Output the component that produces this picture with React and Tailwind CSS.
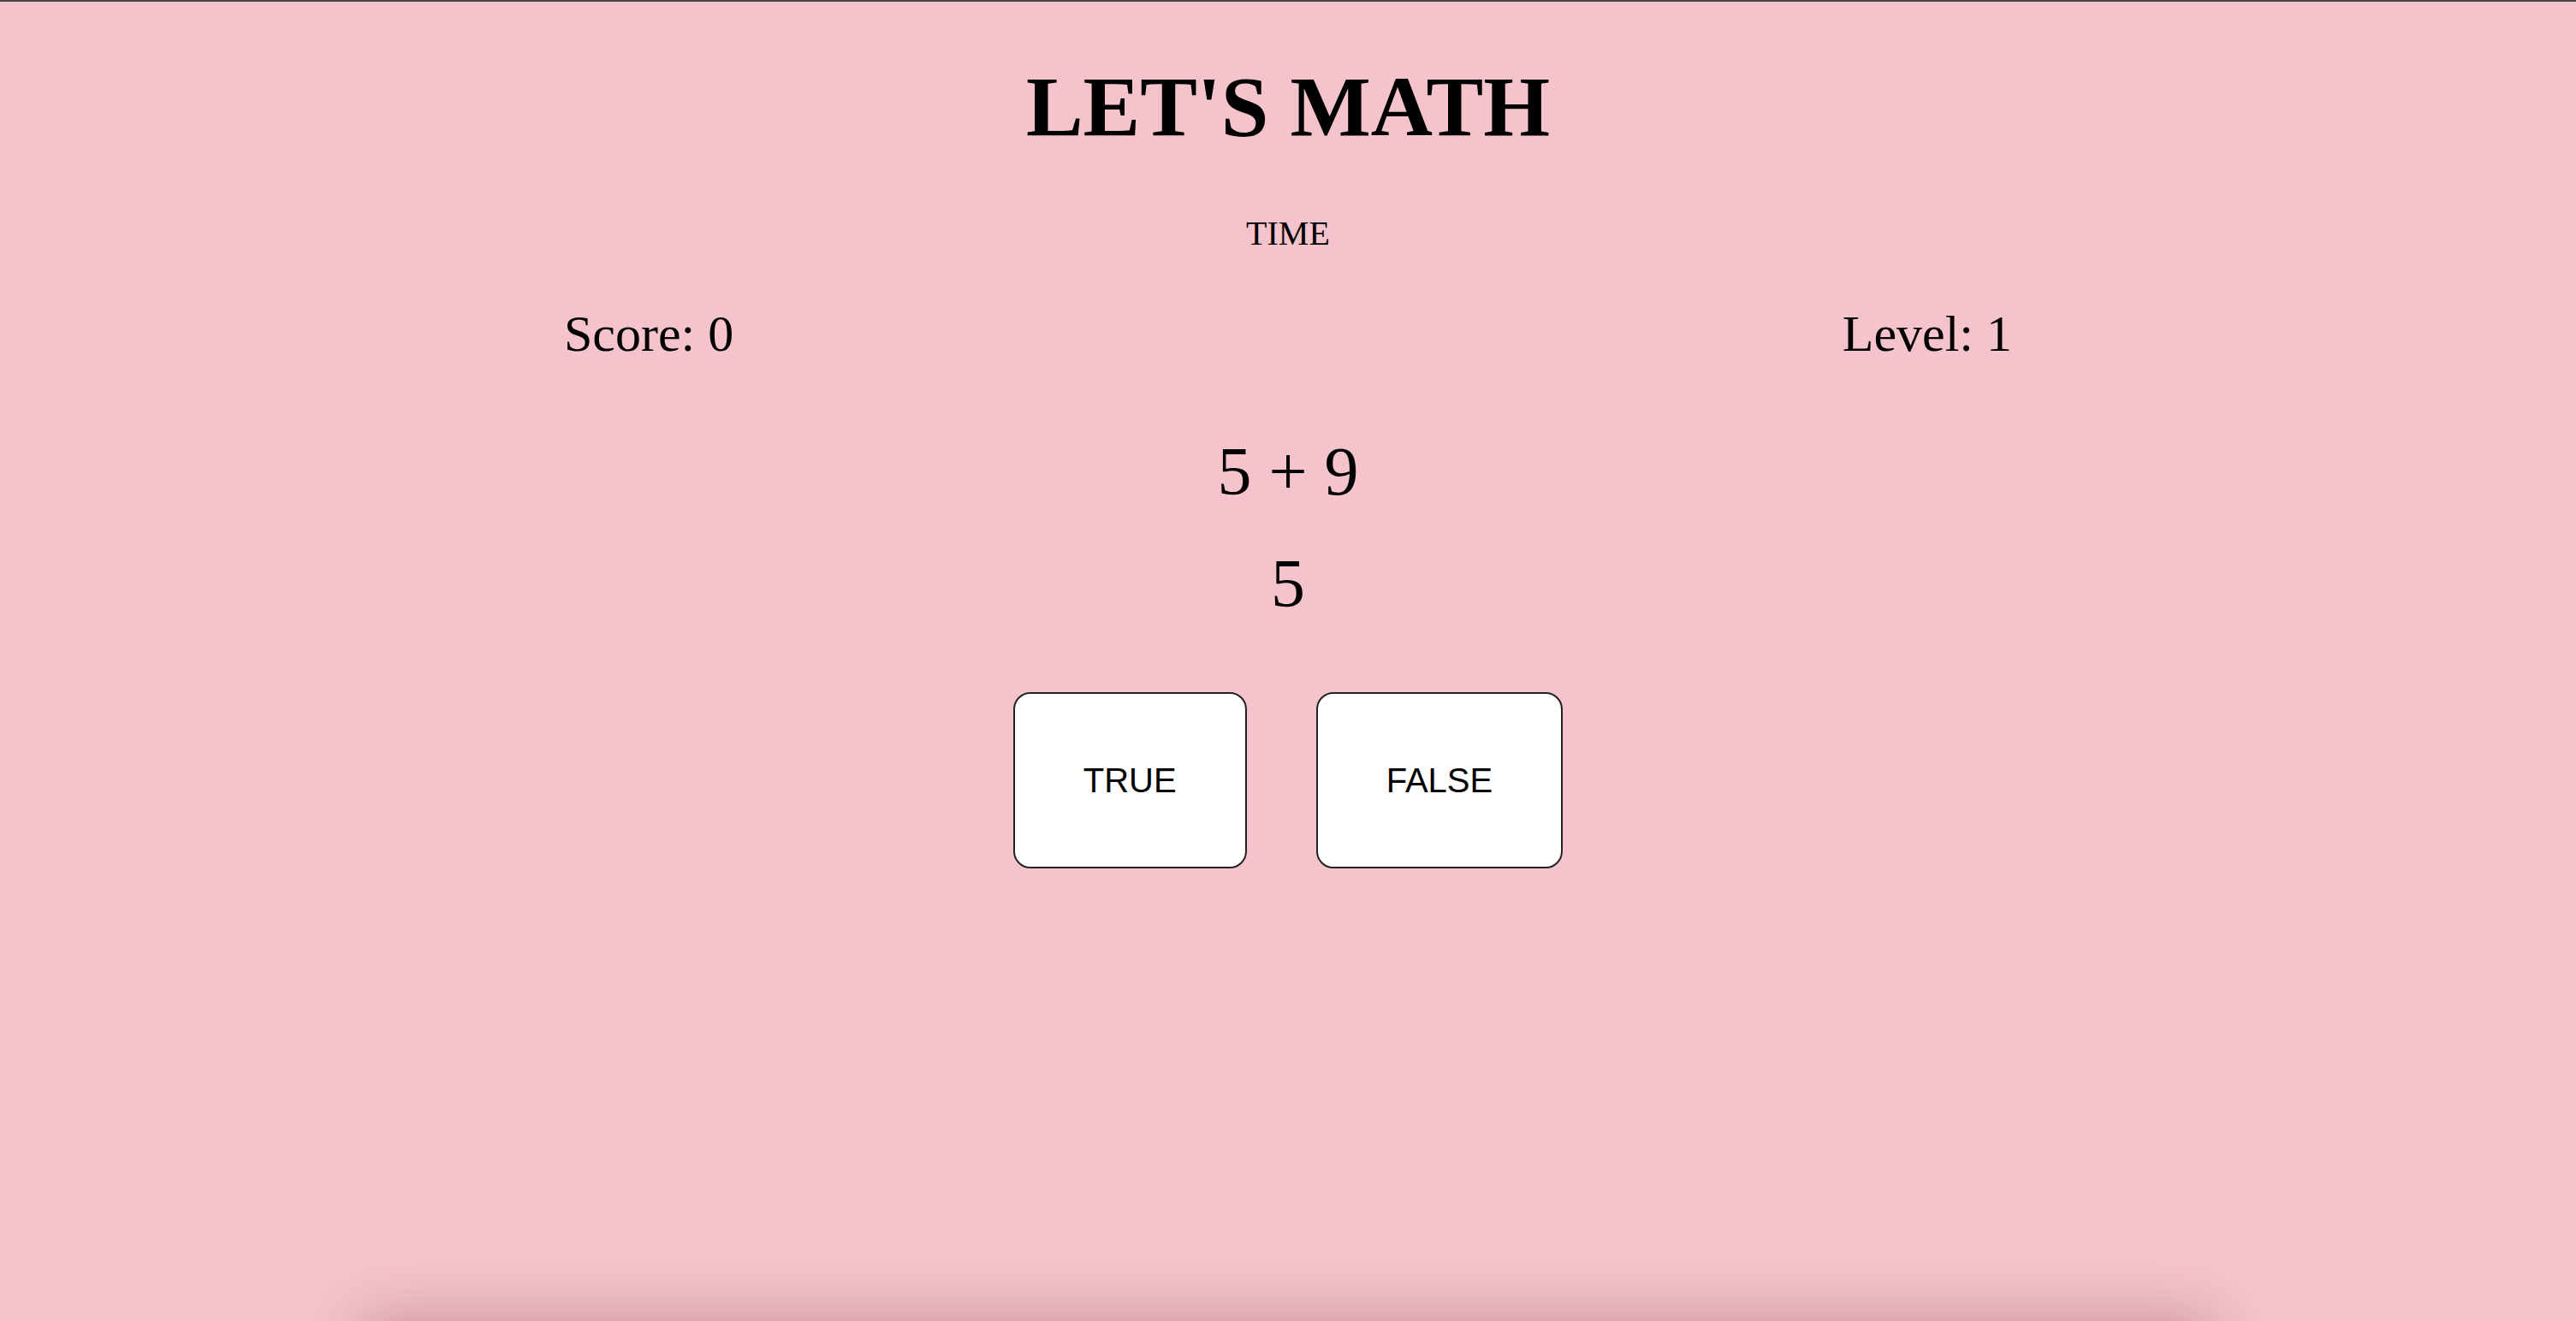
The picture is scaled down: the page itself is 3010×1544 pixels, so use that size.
export default function App() {
  return (
    <div className="h-screen overflow-hidden flex flex-col bg-[#f5c3cc] text-black font-['Liberation_Serif',serif]">
      {/* top edge */}
      <div className="h-[2px] shrink-0 bg-[#474443]" />

      {/* Heading */}
      <h1 className="mt-[65px] text-center text-[100px] leading-[115px] font-bold">
        LET'S MATH
      </h1>

      {/* Timer */}
      <p className="mt-[68px] text-center text-[40px] leading-[46px]">TIME</p>

      {/* Score / Level */}
      <div className="mt-[60px] flex justify-between px-[659px] text-[60px] leading-[69px]">
        <p>Score: 0</p>
        <p>Level: 1</p>
      </div>

      {/* Question */}
      <p className="mt-[80px] text-center text-[80px] leading-[92px]">5 + 9</p>
      <p className="mt-[39px] text-center text-[80px] leading-[92px]">5</p>

      {/* Answers */}
      <div className="mt-[81px] flex justify-center gap-[81px] font-['Liberation_Sans',sans-serif]">
        <button className="bg-white border-2 border-[#222] rounded-[20px] px-[80px] py-[78px] text-[40px] leading-[46px]">
          TRUE
        </button>
        <button className="bg-white border-2 border-[#222] rounded-[20px] px-[80px] py-[78px] text-[40px] leading-[46px]">
          FALSE
        </button>
      </div>

      {/* panel below the fold, only its shadow shows */}
      <div className="mt-auto mx-auto w-[2160px] h-[100px] shrink-0 translate-y-full bg-[#f5c3cc] shadow-[0_0_70px_rgba(80,20,30,0.3)]" />
    </div>
  );
}
